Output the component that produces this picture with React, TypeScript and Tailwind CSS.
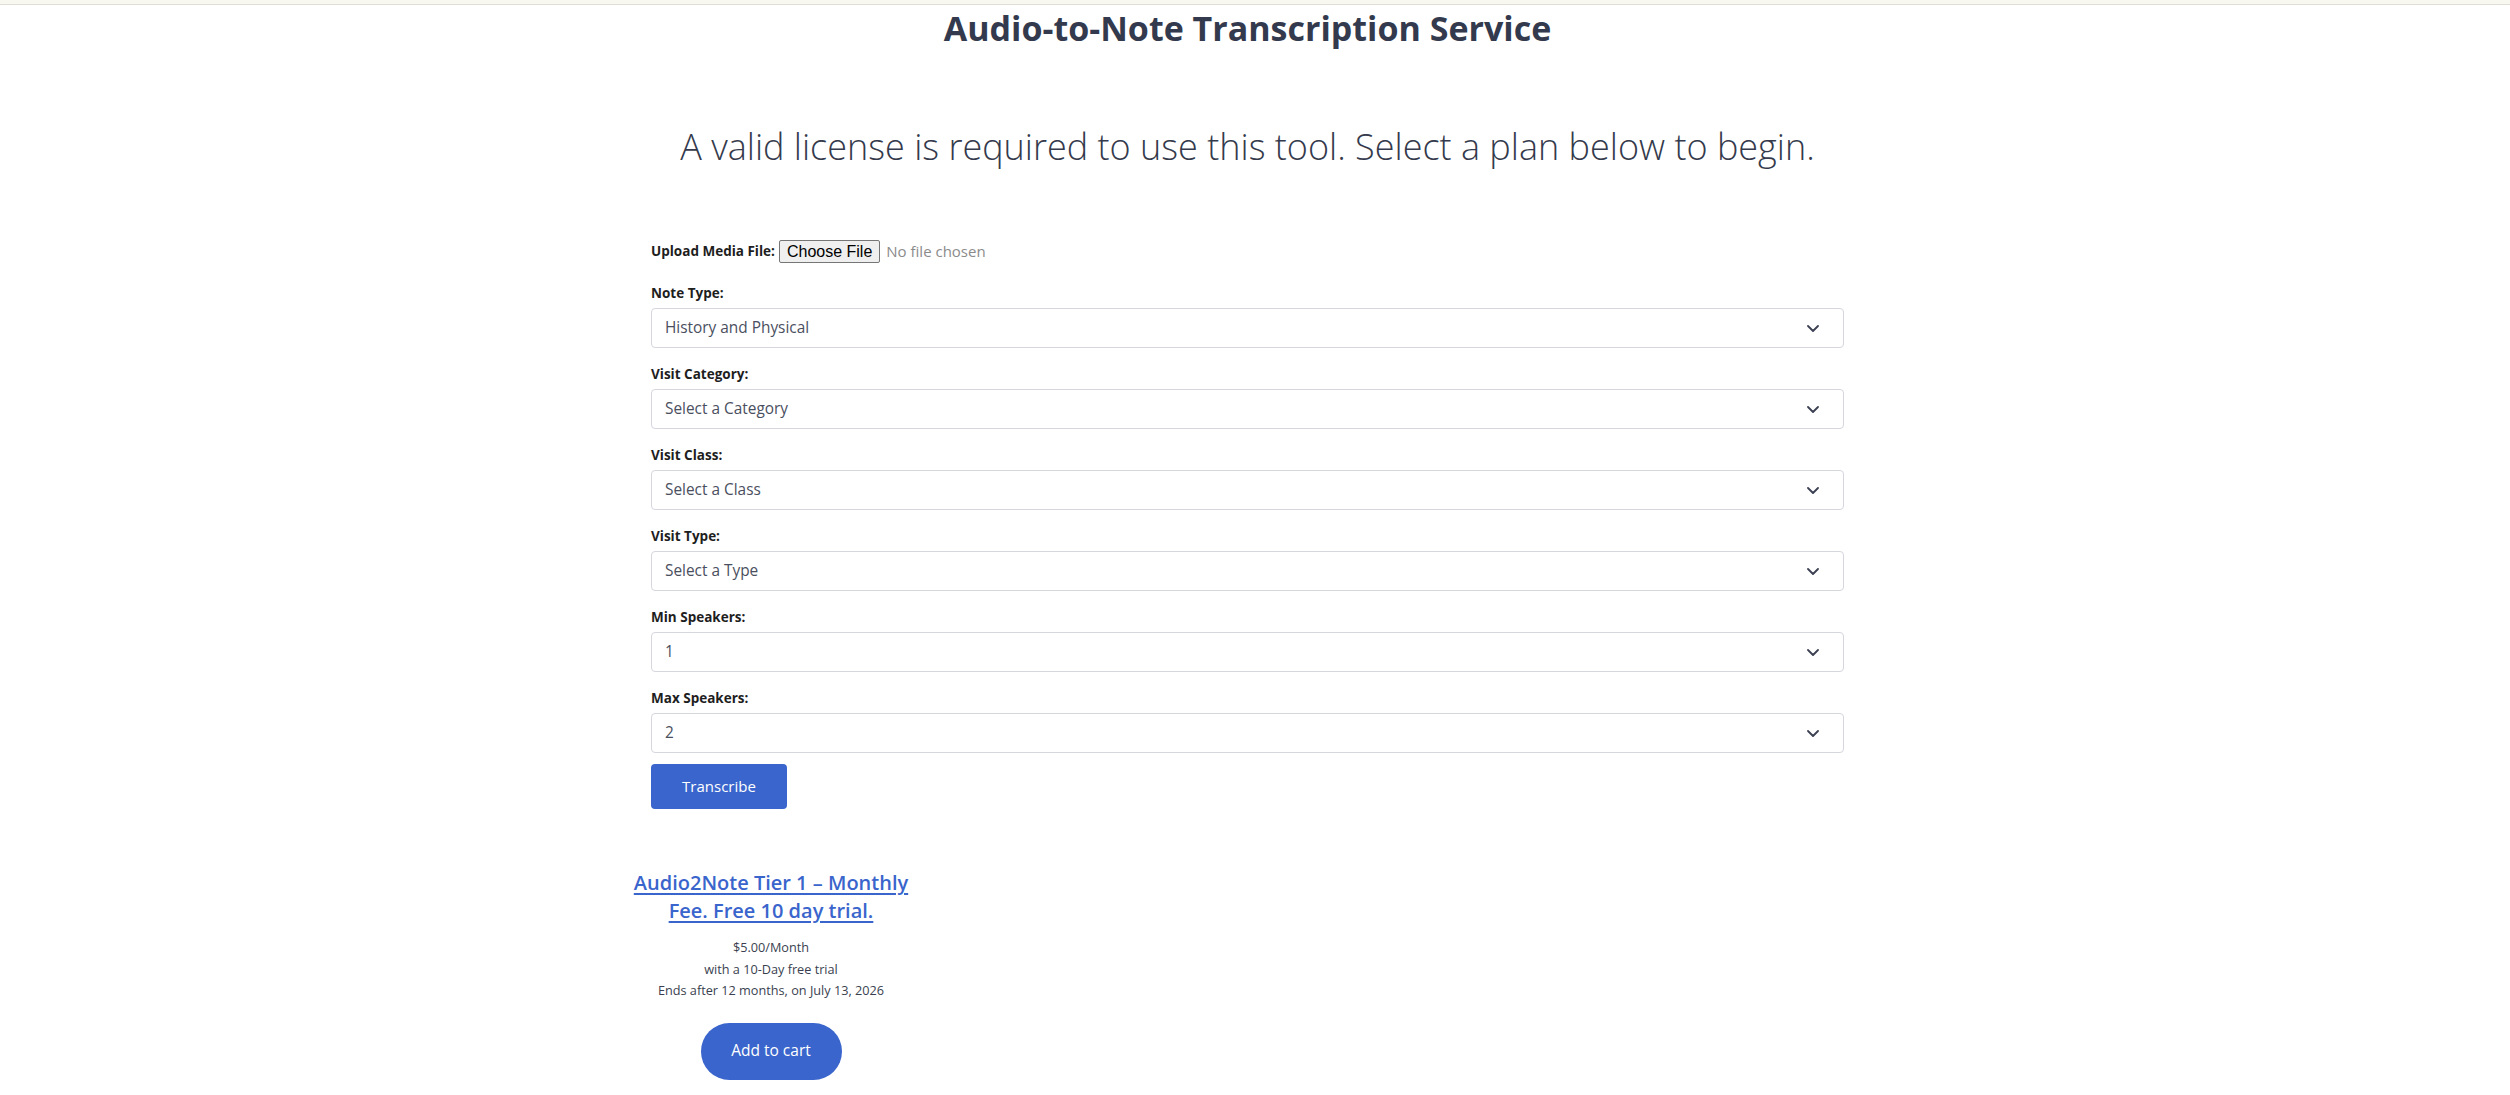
import React from "react";

const Chevron = () => (
  <svg width="12" height="7" viewBox="0 0 12 7" fill="none">
    <path d="M1 1l5 5 5-5" stroke="#3b4052" strokeWidth="1.8" strokeLinecap="round" strokeLinejoin="round" />
  </svg>
);

function SelectField({ label, value }: { label: string; value: string }) {
  return (
    <div className="mb-[16px]">
      <div className="h-[20px] leading-[20px] text-[13.5px] font-bold text-[#1e1e1e] mb-[5px]">{label}</div>
      <div className="h-[40px] border border-[#d6d6de] rounded-[4px] flex items-center justify-between pl-[13px] pr-[24px] text-[15.4px] text-[#4a4f60]">
        <span>{value}</span>
        <Chevron />
      </div>
    </div>
  );
}

export default function App() {
  return (
    <div className="min-h-screen bg-white font-['Open_Sans',sans-serif] text-[#343a4c]">
      <div className="h-[5px] bg-[#f8f8f1] border-b border-[#deded6]" />
      <div className="w-[2495px]">
        <h1 className="text-center text-[34px] font-bold leading-[46px] text-[#333a4d]">
          Audio-to-Note Transcription Service
        </h1>
        <p className="mt-[72px] text-center text-[36px] font-light leading-[48px] text-[#343a4c]">
          A valid license is required to use this tool. Select a plan below to begin.
        </p>

        <div className="w-[1193px] mx-auto mt-[69px]">
          <div className="flex items-center h-[23px] mb-[20px]">
            <span className="text-[13.5px] font-bold text-[#1e1e1e] mr-[4px]">Upload Media File:</span>
            <button className="h-[23px] px-[7px] bg-[#efefef] border border-[#767676] rounded-[2px] text-[16px] leading-[20px] text-black font-['Liberation_Sans',sans-serif]">
              Choose File
            </button>
            <span className="ml-[6px] text-[15px] text-[#8b8b8b]">No file chosen</span>
          </div>

          <SelectField label="Note Type:" value="History and Physical" />
          <SelectField label="Visit Category:" value="Select a Category" />
          <SelectField label="Visit Class:" value="Select a Class" />
          <SelectField label="Visit Type:" value="Select a Type" />
          <SelectField label="Min Speakers:" value="1" />
          <SelectField label="Max Speakers:" value="2" />

          <button className="-mt-[5px] w-[136px] h-[45px] rounded-[4px] bg-[#3a65cc] text-white text-[15px] font-medium">
            Transcribe
          </button>
        </div>

        <div className="w-[1253px] mx-auto mt-[60px] pb-[20px]">
          <div className="w-[300px] flex flex-col items-center text-center">
            <a href="#" className="text-[20px] font-semibold leading-[28px] text-[#3a65cc] underline underline-offset-[3px]">
              Audio2Note Tier 1 – Monthly
              <br />
              Fee. Free 10 day trial.
            </a>
            <div className="mt-[12px] text-[12.7px] leading-[21.5px] text-[#3a3f50]">
              <div>$5.00/Month</div>
              <div>with a 10-Day free trial</div>
              <div>Ends after 12 months, on July 13, 2026</div>
            </div>
            <button className="mt-[21px] w-[141px] h-[57px] rounded-full bg-[#3a65cc] text-white text-[15.5px] font-medium">
              Add to cart
            </button>
          </div>
        </div>
      </div>
    </div>
  );
}
